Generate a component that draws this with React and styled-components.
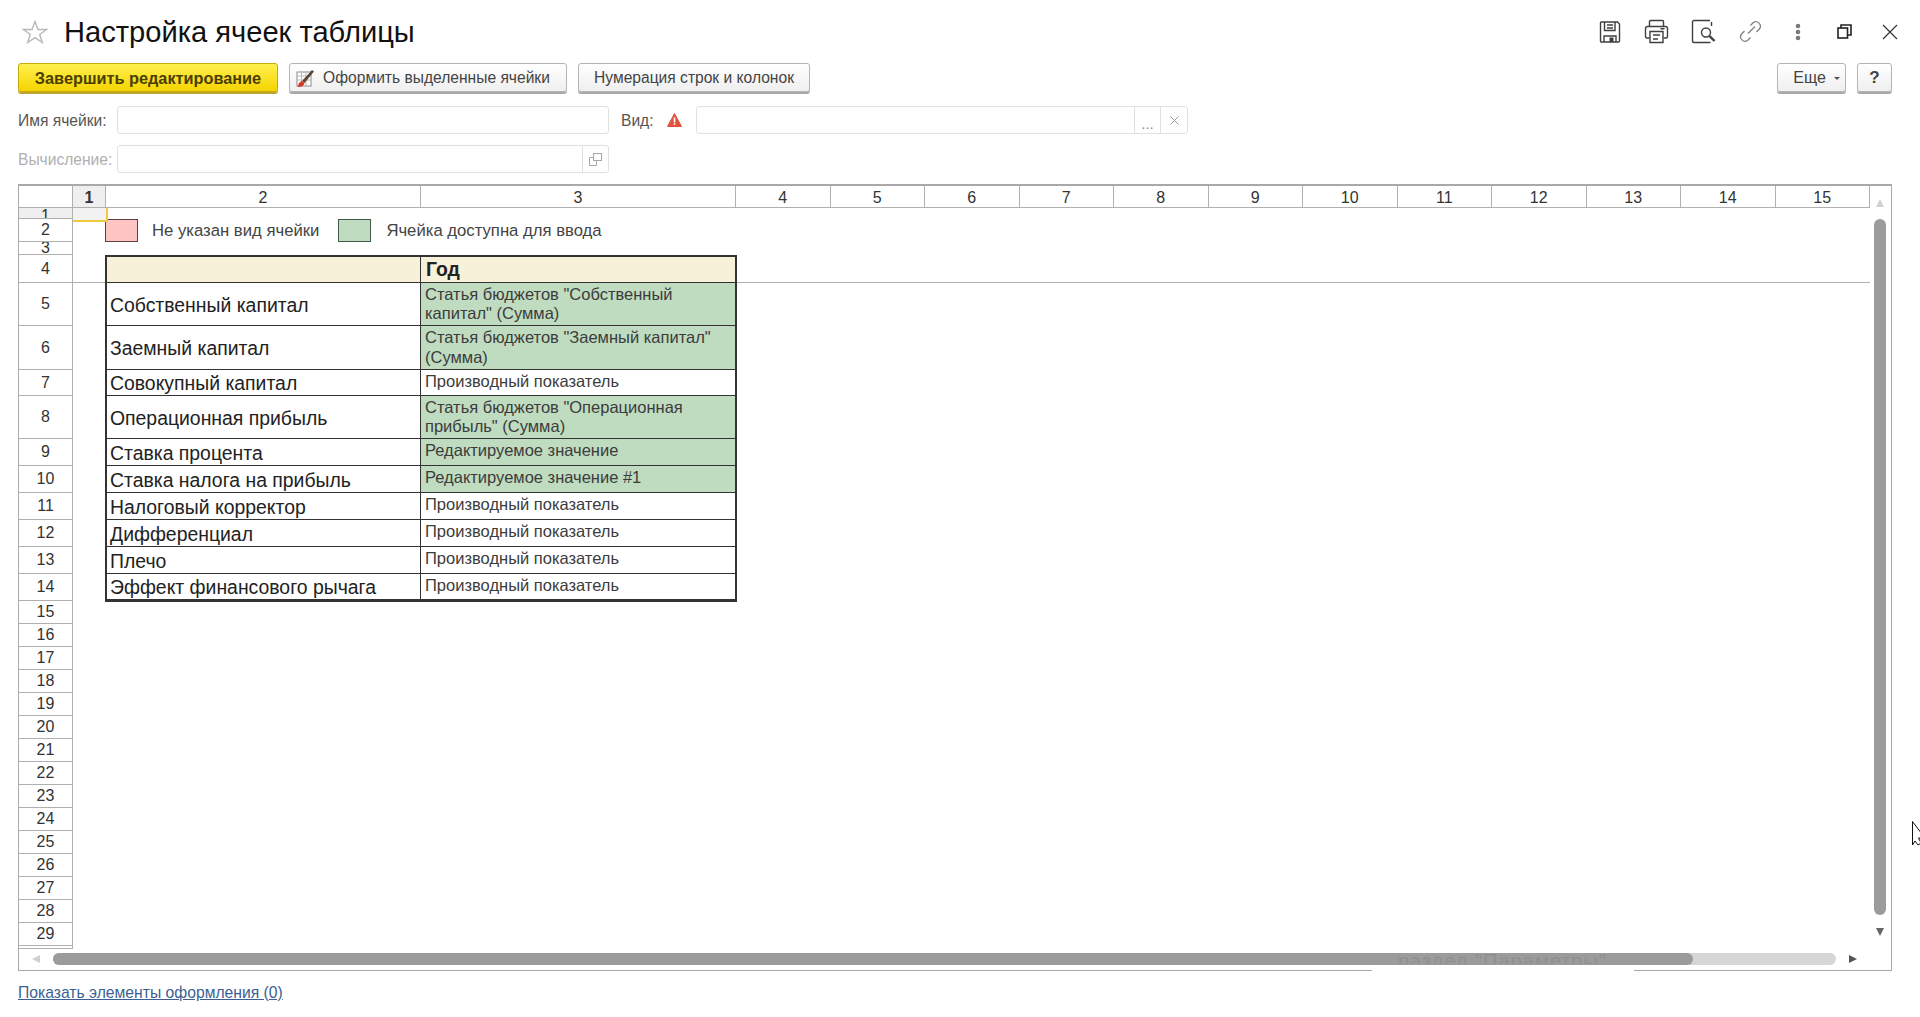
import React from "react";
import styled, { createGlobalStyle } from "styled-components";

const Global = createGlobalStyle`
  html, body { margin: 0; padding: 0; background: #fff; }
  body { font-family: "Liberation Sans", Arial, sans-serif; color: #333; overflow: hidden; }
  * { box-sizing: border-box; }
  svg { flex-shrink: 0; }
`;

const Page = styled.div`
  position: relative;
  width: 1920px;
  height: 1017px;
  padding: 0 28px 0 18px;
  display: flex;
  flex-direction: column;
  overflow: hidden;
`;

const Header = styled.header`
  height: 63px;
  display: flex;
  align-items: center;
  margin-right: -19px;
`;
const StarWrap = styled.span`
  display: flex;
  width: 46px;
  padding-left: 4px;
`;
const Title = styled.h1`
  margin: 0;
  font-size: 29.1px;
  font-weight: 400;
  color: #111;
  line-height: 34px;
`;
const HeaderIcons = styled.div`
  margin-left: auto;
  display: flex;
  align-items: center;
`;
const IconSlot = styled.span`
  display: flex;
  justify-content: center;
  width: ${p => p.$w}px;
`;

const Toolbar = styled.div`
  display: flex;
  height: 30px;
  gap: 11px;
`;
const Button = styled.button`
  height: 29px;
  padding: 1px ${p => p.$pad ?? 16}px 0;
  width: ${p => p.$w}px;
  display: flex;
  align-items: center;
  justify-content: center;
  gap: 8px;
  border: 1px solid #b4b4b4;
  border-radius: 3px;
  background: linear-gradient(#ffffff, #efefef);
  box-shadow: 0 2px 0 #a8a8a8;
  font: 15.6px "Liberation Sans", Arial, sans-serif;
  color: #444;
  white-space: nowrap;
`;
const PrimaryButton = styled(Button)`
  background: linear-gradient(#fff04f, #f5d400);
  border-color: #c9a80a;
  box-shadow: 0 2px 0 #bfa72e;
  font-size: 16.3px;
  font-weight: 700;
  color: #4a3f00;
`;
const PaintButton = styled(Button)`
  padding: 1px 12px 0 2px;
`;
const MoreButton = styled(Button)`
  padding: 1px 2px 0 12px;
  font-size: 16px;
`;
const HelpButton = styled(Button)`
  font-size: 17px;
  font-weight: 700;
`;
const Spacer = styled.div`
  flex: 1;
`;

const FormRow = styled.div`
  display: flex;
  align-items: center;
  height: 28px;
  margin-top: ${p => p.$mt}px;
`;
const Label = styled.label`
  width: ${p => p.$w}px;
  margin-left: ${p => p.$ml ?? 0}px;
  padding-top: 1px;
  font-size: 15.6px;
  color: ${p => (p.$muted ? "#b0b0b0" : "#555")};
  white-space: nowrap;
`;
const Field = styled.div`
  width: ${p => p.$w}px;
  height: 28px;
  border: 1px solid #e0e0e0;
  border-radius: 3px;
  display: flex;
  justify-content: flex-end;
  background: #fff;
`;
const FieldBtn = styled.span`
  width: ${p => p.$w}px;
  border-left: 1px solid #e0e0e0;
  display: flex;
  align-items: center;
  justify-content: center;
  color: #8a8a8a;
  font-size: 15px;
  padding-top: ${p => p.$pt ?? 0}px;
`;
const WarnSlot = styled.span`
  display: flex;
  width: 29px;
`;

const Frame = styled.section`
  position: relative;
  margin-top: 11px;
  height: 787px;
  border: 1px solid #a9a9a9;
  border-top-width: 2px;
  display: grid;
  grid-template-columns: 1851px 21px;
  grid-template-rows: 763px 21px;
`;
const Sheet = styled.div`
  display: grid;
  grid-template-columns: 54px 33px 315px 315px repeat(12, 94.5px);
  grid-template-rows: 22px 11px 23px 13px 28px 43px 44px 26px 43px repeat(6, 27px) repeat(15, 23px) 3px;
  overflow: hidden;
  font-size: 16px;
`;
const ColHead = styled.div`
  grid-row: 1;
  grid-column: ${p => p.$c};
  border-right: 1px solid #b0b0b0;
  border-bottom: 1px solid #b0b0b0;
  background: ${p => (p.$sel ? "#efefef" : "#fff")};
  font-weight: ${p => (p.$sel ? 700 : 400)};
  text-align: center;
  line-height: 23px;
  color: #333;
`;
const RowHead = styled.div`
  grid-column: 1;
  grid-row: ${p => p.$r};
  border-right: 1px solid #b0b0b0;
  border-bottom: 1px solid #b0b0b0;
  background: ${p => (p.$sel ? "#efefef" : "#fff")};
  display: flex;
  align-items: center;
  justify-content: center;
  overflow: hidden;
  color: #333;
  padding-top: ${p => (p.$sel ? 5 : 0)}px;
`;
const SelectedCell = styled.div`
  grid-column: 2;
  grid-row: 2;
  width: 35px;
  height: 14px;
  background: #f2f2f2;
  border-right: 2px solid #f0c93c;
  border-bottom: 2px solid #f0c93c;
  z-index: 3;
`;
const FreezeLine = styled.div`
  grid-column: 2 / -1;
  grid-row: 5;
  align-self: end;
  height: 1px;
  background: #b0b0b0;
`;
const Legend = styled.div`
  grid-column: 3 / 5;
  grid-row: 3;
  margin-left: -1px;
  display: flex;
  align-items: center;
  font-size: 16.7px;
  color: #444;
`;
const Swatch = styled.span`
  width: ${p => p.$w}px;
  height: 100%;
  background: ${p => p.$bg};
  border: 1px solid ${p => p.$line};
`;
const LegendText = styled.span`
  margin: 0 ${p => p.$mr}px 0 ${p => p.$ml}px;
  white-space: nowrap;
`;
const Cell = styled.div`
  grid-row: ${p => p.$r};
  grid-column: ${p => p.$c};
  margin-left: ${p => (p.$c === 3 ? -1 : 0)}px;
  margin-right: ${p => (p.$c === 4 ? -1 : 0)}px;
  margin-bottom: ${p => (p.$last ? -1 : 0)}px;
  display: flex;
  align-items: center;
  overflow: hidden;
  background: ${p => p.$bg || "#fff"};
  border-bottom: ${p => (p.$last ? "3px" : "1px")} solid #333;
  border-top: ${p => (p.$first ? "2px solid #333" : "none")};
  border-left: ${p => (p.$c === 3 ? "2px solid #333" : "none")};
  border-right: ${p => (p.$c === 3 ? "1px solid #333" : "2px solid #333")};
  z-index: 2;
`;
const NameText = styled.span`
  padding: 1px 0 0 3px;
  font-size: 19.4px;
  line-height: 20px;
  color: #222;
  white-space: nowrap;
`;
const ValueText = styled.span`
  padding: 0 6px ${p => (p.$two ? 0 : 2)}px 4px;
  font-size: 16.5px;
  line-height: 19.5px;
  color: #3c3c3c;
`;
const YearText = styled.span`
  padding: 0 0 0 5px;
  font-size: 19.4px;
  font-weight: 700;
  color: #222;
`;

const VBar = styled.div`
  display: flex;
  flex-direction: column;
  align-items: center;
  padding-right: 1px;
`;
const ArrowZone = styled.div`
  height: ${p => p.$h}px;
  display: flex;
  align-items: center;
  justify-content: center;
`;
const VThumb = styled.div`
  width: 12px;
  height: 696px;
  border-radius: 6px;
  background: #9b9b9b;
`;
const HBar = styled.div`
  grid-column: 1 / 3;
  position: relative;
  display: flex;
  align-items: center;
  padding: 0 0 1px 0;
`;
const HLeft = styled.div`
  width: 34px;
  display: flex;
  padding-left: 13px;
`;
const HTrack = styled.div`
  width: 1783px;
  height: 12px;
  border-radius: 6px;
  background: #d6d6d6;
`;
const HThumb = styled.div`
  width: 1640px;
  height: 12px;
  border-radius: 6px;
  background: #9b9b9b;
`;
const HRight = styled.div`
  flex: 1;
  display: flex;
  padding-left: 13px;
`;
const Ghost = styled.div`
  position: absolute;
  left: 1379px;
  top: 3px;
  width: 215px;
  height: 12px;
  overflow: hidden;
  font-size: 20px;
  line-height: 19px;
  color: #909090;
  letter-spacing: 1px;
  white-space: nowrap;
`;
const BorderGap = styled.div`
  position: absolute;
  left: 1353px;
  bottom: -1px;
  width: 262px;
  height: 1px;
  background: #fff;
`;
const FootLink = styled.a`
  margin-top: 13px;
  align-self: flex-start;
  font-size: 15.7px;
  color: #3b5f92;
  text-decoration: underline;
  line-height: 18px;
`;
const CursorWrap = styled.div`
  position: absolute;
  left: 1912px;
  top: 821px;
  display: flex;
`;

const Star = () => (
  <svg width="26" height="24" viewBox="0 0 26 24" fill="none" stroke="#b9b9b9" strokeWidth="1.4">
    <path d="M13 1.5l3 8h8.5l-6.8 5 2.6 8L13 17.6 5.7 22.5l2.6-8-6.8-5H10z" />
  </svg>
);
const Save = () => (
  <svg width="24" height="24" viewBox="0 0 24 24" fill="none" stroke="#3f3f3f" strokeWidth="1.4">
    <path d="M3.500 2h16l2 2v17a1 1 0 0 1-1 1h-17a1 1 0 0 1-1-1V3a1 1 0 0 1 1-1z" />
    <path d="M6.500 2v8.500h10.500V2M9 5h6M9 8h6M6 22v-6h12v6" />
    <rect x="11.500" y="17.500" width="4" height="4.500" fill="#3f3f3f" stroke="none" />
  </svg>
);
const Print = () => (
  <svg width="25" height="25" viewBox="0 0 25 25" fill="none" stroke="#3f3f3f" strokeWidth="1.4">
    <path d="M5.500 7.500V2.500a1 1 0 0 1 1-1h12a1 1 0 0 1 1 1v5" />
    <path d="M5.500 19h-2.500a1.500 1.500 0 0 1-1.500-1.500v-8a2 2 0 0 1 2-2h18a2 2 0 0 1 2 2v8a1.500 1.500 0 0 1-1.500 1.500h-2.500" />
    <path d="M6 12.500h13V23.500H6zM9 16h7M9 20h5M16.500 9.800h4" />
  </svg>
);
const Preview = () => (
  <svg width="25" height="25" viewBox="0 0 25 25" fill="none" stroke="#3f3f3f" strokeWidth="1.4">
    <path d="M19 1.500H3a1.500 1.500 0 0 0-1.500 1.500v19a1.500 1.500 0 0 0 1.500 1.500h16.500M20.500 7V3" />
    <circle cx="15" cy="13.500" r="4.500" />
    <path d="M18.500 17l5 5" strokeWidth="2.400" />
  </svg>
);
const LinkIcon = () => (
  <svg width="25" height="25" viewBox="0 0 25 25" fill="none" stroke="#7f7f7f" strokeWidth="1.300">
    <path d="M10 14.500l7-7" />
    <path d="M12.500 6.500l2.600-2.800a4.500 4.500 0 0 1 6.300 6.300L18.500 13" />
    <path d="M12.500 18.500l-2.700 2.800a4.500 4.500 0 0 1-6.300-6.300L6.500 12" />
  </svg>
);
const Dots = () => (
  <svg width="6" height="18" viewBox="0 0 6 18" fill="#7a7a7a">
    <circle cx="3" cy="3" r="2.300" />
    <circle cx="3" cy="9" r="2.300" />
    <circle cx="3" cy="15" r="2.300" />
  </svg>
);
const Restore = () => (
  <svg width="15" height="15" viewBox="0 0 15 15" fill="none" stroke="#222" strokeWidth="1.600">
    <rect x="1" y="4" width="9.500" height="10" />
    <path d="M4 4V1h10v10h-3.500" />
  </svg>
);
const CloseIcon = () => (
  <svg width="16" height="16" viewBox="0 0 16 16" fill="none" stroke="#333" strokeWidth="1.200">
    <path d="M1 1l14 14M15 1L1 15" />
  </svg>
);
const Brush = () => (
  <svg width="19" height="19" viewBox="0 0 19 19" fill="none">
    <rect x="1" y="3" width="14" height="14" fill="#fff" stroke="#8a8a8a" />
    <path d="M1 7h14M1 11h14M5.500 3v14M10 3v14" stroke="#b9b9b9" />
    <path d="M6 12L16 1l2 1.500L8.500 14z" fill="#5b4632" />
    <path d="M2 18c0-3 1.500-5.500 4-6l2.500 2c-.5 3-3.500 4-6.500 4z" fill="#d33a2c" />
  </svg>
);
const Warn = () => (
  <svg width="15" height="14" viewBox="0 0 15 14">
    <path d="M7.500 .5L14.500 13.500H.5z" fill="#e0533f" stroke="#e0533f" strokeLinejoin="round" />
    <rect x="6.700" y="4.500" width="1.600" height="5" fill="#fff" />
    <rect x="6.700" y="10.300" width="1.600" height="1.600" fill="#fff" />
  </svg>
);
const CopyIcon = () => (
  <svg width="13" height="13" viewBox="0 0 13 13" fill="none" stroke="#a8a8a8">
    <rect x="4.500" y=".5" width="8" height="7" />
    <path d="M4.500 4.500H.5v8h7V7.500" />
  </svg>
);
const ClearIcon = () => (
  <svg width="9" height="9" viewBox="0 0 9 9" fill="none" stroke="#9a9a9a">
    <path d="M.5 .5l8 8M8.500 .5l-8 8" />
  </svg>
);
const Tri = ({ dir, color }) => {
  const d = {
    up: "M0 8L4 0l4 8z",
    down: "M0 0h8L4 8z",
    left: "M8 0v8L0 4z",
    right: "M0 0v8l8-4z",
  }[dir];
  return (
    <svg width="8" height="8" viewBox="0 0 8 8">
      <path d={d} fill={color} />
    </svg>
  );
};
const Caret = () => (
  <svg width="6" height="3" viewBox="0 0 6 3">
    <path d="M0 0h6L3 3z" fill="#555" />
  </svg>
);
const Cursor = () => (
  <svg width="16" height="25" viewBox="0 0 16 25" fill="#fff" stroke="#111">
    <path d="M.5 .5V24l2.500-4 3 4 3-2-2.500-5H13z" />
  </svg>
);

const rows = [
  { r: 6, name: "Собственный капитал", value: 'Статья бюджетов "Собственный капитал" (Сумма)', g: true, two: true },
  { r: 7, name: "Заемный капитал", value: 'Статья бюджетов "Заемный капитал" (Сумма)', g: true, two: true },
  { r: 8, name: "Совокупный капитал", value: "Производный показатель" },
  { r: 9, name: "Операционная прибыль", value: 'Статья бюджетов "Операционная прибыль" (Сумма)', g: true, two: true },
  { r: 10, name: "Ставка процента", value: "Редактируемое значение", g: true },
  { r: 11, name: "Ставка налога на прибыль", value: "Редактируемое значение #1", g: true },
  { r: 12, name: "Налоговый корректор", value: "Производный показатель" },
  { r: 13, name: "Дифференциал", value: "Производный показатель" },
  { r: 14, name: "Плечо", value: "Производный показатель" },
  { r: 15, name: "Эффект финансового рычага", value: "Производный показатель", last: true },
];
const GREEN = "#bfdbc0";
const CREAM = "#f8f1d9";

export default function App() {
  return (
    <Page>
      <Global />
      <Header>
        <StarWrap><Star /></StarWrap>
        <Title>Настройка ячеек таблицы</Title>
        <HeaderIcons>
          <IconSlot $w={46}><Save /></IconSlot>
          <IconSlot $w={47}><Print /></IconSlot>
          <IconSlot $w={47}><Preview /></IconSlot>
          <IconSlot $w={47}><LinkIcon /></IconSlot>
          <IconSlot $w={47}><Dots /></IconSlot>
          <IconSlot $w={47}><Restore /></IconSlot>
          <IconSlot $w={43}><CloseIcon /></IconSlot>
        </HeaderIcons>
      </Header>
      <Toolbar>
        <PrimaryButton $w={260}>Завершить редактирование</PrimaryButton>
        <PaintButton $w={278}><Brush />Оформить выделенные ячейки</PaintButton>
        <Button $w={232}>Нумерация строк и колонок</Button>
        <Spacer />
        <MoreButton $w={69}>Еще <Caret /></MoreButton>
        <HelpButton $w={35} $pad={0}>?</HelpButton>
      </Toolbar>
      <FormRow $mt={13}>
        <Label $w={99}>Имя ячейки:</Label>
        <Field $w={492} />
        <Label $w={46} $ml={12}>Вид:</Label>
        <WarnSlot><Warn /></WarnSlot>
        <Field $w={492}>
          <FieldBtn $w={26} $pt={6}>...</FieldBtn>
          <FieldBtn $w={27}><ClearIcon /></FieldBtn>
        </Field>
      </FormRow>
      <FormRow $mt={11}>
        <Label $w={99} $muted>Вычисление:</Label>
        <Field $w={492}>
          <FieldBtn $w={26}><CopyIcon /></FieldBtn>
        </Field>
      </FormRow>
      <Frame>
        <Sheet>
          <ColHead $c={1} />
          {Array.from({ length: 15 }, (_, i) => (
            <ColHead key={i} $c={i + 2} $sel={i === 0}>{i + 1}</ColHead>
          ))}
          {Array.from({ length: 30 }, (_, i) => (
            <RowHead key={i} $r={i + 2} $sel={i === 0}>{i < 29 ? i + 1 : ""}</RowHead>
          ))}
          <SelectedCell />
          <FreezeLine />
          <Legend>
            <Swatch $w={33} $bg="#ffc5c5" $line="#5b4040" />
            <LegendText $ml={14} $mr={19}>Не указан вид ячейки</LegendText>
            <Swatch $w={33} $bg={GREEN} $line="#3f5a46" />
            <LegendText $ml={15} $mr={0}>Ячейка доступна для ввода</LegendText>
          </Legend>
          <Cell $r={5} $c={3} $bg={CREAM} $first />
          <Cell $r={5} $c={4} $bg={CREAM} $first><YearText>Год</YearText></Cell>
          {rows.map(row => (
            <React.Fragment key={row.r}>
              <Cell $r={row.r} $c={3} $last={row.last}><NameText>{row.name}</NameText></Cell>
              <Cell $r={row.r} $c={4} $last={row.last} $bg={row.g ? GREEN : "#fff"}><ValueText $two={row.two}>{row.value}</ValueText></Cell>
            </React.Fragment>
          ))}
        </Sheet>
        <VBar>
          <ArrowZone $h={33}><Tri dir="up" color="#cfcfcf" /></ArrowZone>
          <VThumb />
          <ArrowZone $h={34}><Tri dir="down" color="#666" /></ArrowZone>
        </VBar>
        <HBar>
          <HLeft><Tri dir="left" color="#cfcfcf" /></HLeft>
          <HTrack><HThumb /></HTrack>
          <HRight><Tri dir="right" color="#555" /></HRight>
          <Ghost>раздел "Параметры"</Ghost>
        </HBar>
        <BorderGap />
      </Frame>
      <FootLink href="#">Показать элементы оформления (0)</FootLink>
      <CursorWrap><Cursor /></CursorWrap>
    </Page>
  );
}
